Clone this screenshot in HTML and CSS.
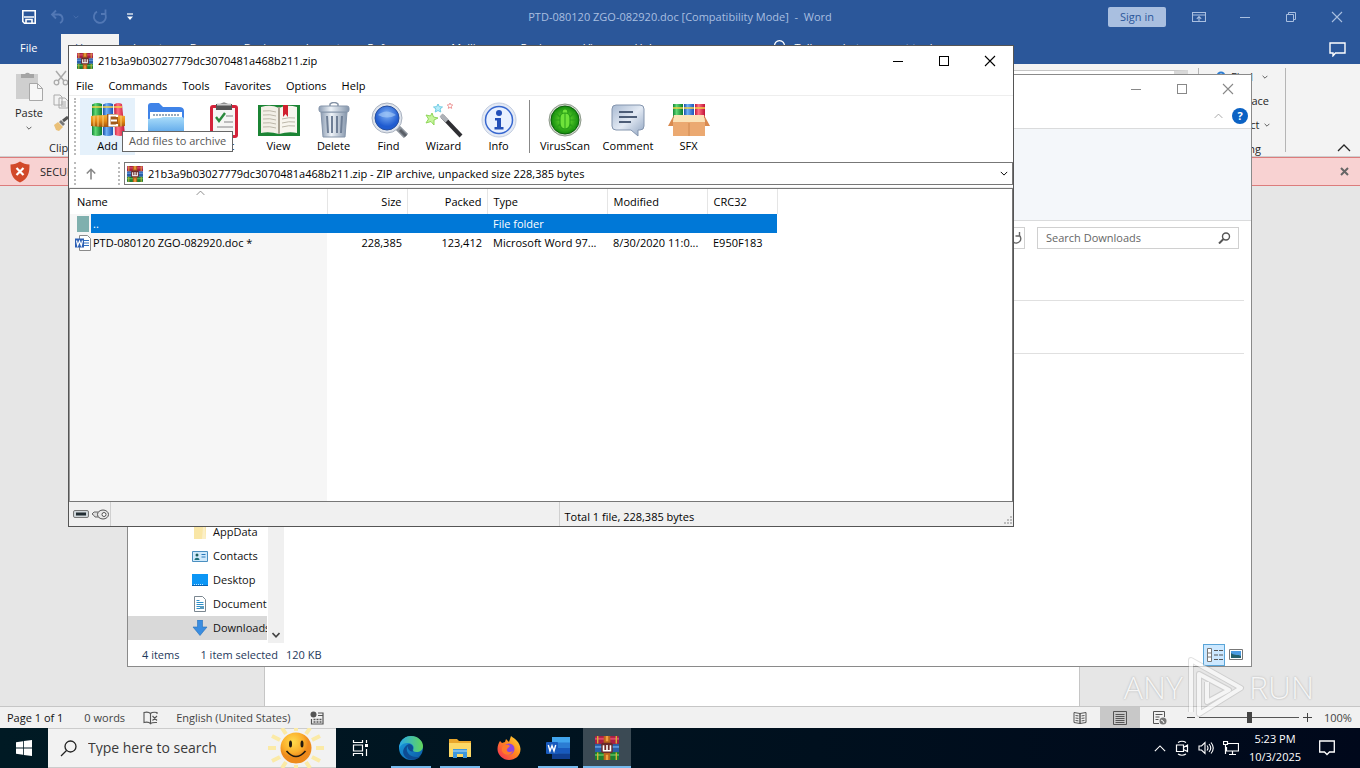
FILE: index.html
```html
<!DOCTYPE html>
<html lang="en">
<head>
<meta charset="utf-8">
<title>Desktop</title>
<link rel="stylesheet" href="styles.css">
</head>
<body>
<svg class="defs" aria-hidden="true">
  <defs>
    <linearGradient id="g-green"><stop offset="0" stop-color="#12853a"/><stop offset=".35" stop-color="#5fd873"/><stop offset="1" stop-color="#0b7a2c"/></linearGradient>
    <linearGradient id="g-blue"><stop offset="0" stop-color="#1c4fa8"/><stop offset=".35" stop-color="#6fb0f5"/><stop offset="1" stop-color="#1d55b8"/></linearGradient>
    <linearGradient id="g-red"><stop offset="0" stop-color="#c3193c"/><stop offset=".35" stop-color="#ff6f80"/><stop offset="1" stop-color="#c01238"/></linearGradient>
    <linearGradient id="g-belt" x2="0" y2="1"><stop offset="0" stop-color="#f4b13c"/><stop offset=".5" stop-color="#e58a14"/><stop offset="1" stop-color="#a3520a"/></linearGradient>
    <linearGradient id="g-folder" x2="0" y2="1"><stop offset="0" stop-color="#a8dcfa"/><stop offset="1" stop-color="#4d9be6"/></linearGradient>
    <linearGradient id="g-steel"><stop offset="0" stop-color="#8d9db3"/><stop offset=".4" stop-color="#eef3f8"/><stop offset="1" stop-color="#8495ab"/></linearGradient>
    <radialGradient id="g-lens" cy=".35"><stop offset="0" stop-color="#7fb2f5"/><stop offset="1" stop-color="#1f5bd0"/></radialGradient>
    <radialGradient id="g-virus"><stop offset="0" stop-color="#7df03a"/><stop offset="1" stop-color="#128a0c"/></radialGradient>
    <linearGradient id="g-bubble" x2="1" y2="1"><stop offset="0" stop-color="#a9bad2"/><stop offset=".5" stop-color="#e3eaf4"/><stop offset="1" stop-color="#8ea3c0"/></linearGradient>
    <radialGradient id="g-sun" cx=".4" cy=".3"><stop offset="0" stop-color="#ffdc4e"/><stop offset=".7" stop-color="#fbae2b"/><stop offset="1" stop-color="#ee8a1c"/></radialGradient>
    <linearGradient id="g-edge" x2="1" y2="1"><stop offset="0" stop-color="#1ba0e0"/><stop offset="1" stop-color="#0c59a4"/></linearGradient>
    <linearGradient id="g-edge2"><stop offset="0" stop-color="#2aa9e8"/><stop offset="1" stop-color="#62d65a"/></linearGradient>
    <linearGradient id="g-fox" x1="1" x2="0" y2="1"><stop offset="0" stop-color="#ffe23a"/><stop offset=".45" stop-color="#ff8a1e"/><stop offset="1" stop-color="#f5255c"/></linearGradient>
  </defs>
  <symbol id="rar" viewBox="0 0 16 16">
    <rect width="16" height="5.400" rx=".7" fill="#a91f45"/><rect y="1.200" width="16" height="1.300" fill="#d9486b"/>
    <rect y="5.400" width="16" height="5.400" fill="#2a5ea8"/><rect y="6.600" width="16" height="1.300" fill="#5b94d8"/>
    <rect y="10.700" width="16" height="5.300" rx=".7" fill="#1d7f30"/><rect y="12" width="16" height="1.300" fill="#4fb254"/>
    <path d="M1.800 0v5M14.200 0v5M1.800 11v5M14.200 11v5" stroke="#d8b436" stroke-width=".9"/>
    <rect x="5.800" width="4.400" height="16" fill="#b8641c"/><path d="M8 0v3.500M8 12.500v3.500" stroke="#f0a040" stroke-width="1.600"/>
    <rect x="4.200" y="4.500" width="7.600" height="6.800" rx="1" fill="#6b2a2a"/>
    <path d="M5.700 6.200v3.600h4.600V6.200M8 6v3.500" fill="none" stroke="#fff" stroke-width="1.100"/>
  </symbol>
  <symbol id="down" viewBox="0 0 10 6"><path d="M1 1l4 4 4-4" fill="none" stroke="currentColor" stroke-width="1.200"/></symbol>
  <symbol id="up" viewBox="0 0 14 8"><path d="M1 7l6-6 6 6" fill="none" stroke="currentColor" stroke-width="1.300"/></symbol>
  <symbol id="close" viewBox="0 0 12 12"><path d="M1 1l10 10M11 1L1 11" fill="none" stroke="currentColor" stroke-width="1.100"/></symbol>
  <symbol id="min" viewBox="0 0 12 12"><path d="M1 6.500h10" stroke="currentColor"/></symbol>
  <symbol id="max" viewBox="0 0 12 12"><rect x="1.500" y="1.500" width="9" height="9" fill="none" stroke="currentColor"/></symbol>
</svg>

<div class="screen">
<main class="desktop">

  <section class="word" aria-label="Word">
    <header class="word-title">
      <div class="quick">
        <button aria-label="Save"><svg width="16" height="16" viewBox="0 0 16 16"><path d="M1.800 1.800h12.400v12.400H3.500l-1.700-1.700z" fill="none" stroke="#fff" stroke-width="1.600"/><path d="M3 8h10" stroke="#fff" stroke-width="1.500"/><path d="M5 15v-4.500h6V15" fill="none" stroke="#fff" stroke-width="1.600"/></svg></button>
        <button aria-label="Undo"><svg width="16" height="16" viewBox="0 0 16 16"><path d="M6 1.500L2 5.500l4 4M2 5.500h7a4.500 4.500 0 0 1 1 8.500" fill="none" stroke="#5278b5" stroke-width="1.800"/></svg></button>
        <svg class="dim" width="6" height="4"><use href="#down"/></svg>
        <button aria-label="Redo"><svg width="16" height="16" viewBox="0 0 16 16"><path d="M5 2.600A6 6 0 1 0 12.500 4M9 5h4.500V.5" fill="none" stroke="#5278b5" stroke-width="1.800"/></svg></button>
        <button class="custom" aria-label="Customize"><svg width="8" height="8" viewBox="0 0 8 8"><path d="M1 1h6" stroke="#fff" stroke-width="1.200"/><path d="M1 3.500h6L4 7z" fill="#fff"/></svg></button>
      </div>
      <h1>PTD-080120 ZGO-082920.doc [Compatibility Mode]&nbsp; -&nbsp; Word</h1>
      <div class="word-ctl">
        <button class="signin">Sign in</button>
        <button aria-label="Ribbon options"><svg width="14" height="12" viewBox="0 0 14 12"><path d="M.5 1.500h13v9H.5zM.5 4h13M7 10V6M4.800 7.800L7 5.600l2.200 2.200" fill="none" stroke="currentColor" stroke-width="1.100"/></svg></button>
        <button aria-label="Minimize"><svg width="12" height="12"><use href="#min"/></svg></button>
        <button aria-label="Restore"><svg width="12" height="12" viewBox="0 0 12 12"><path d="M1.500 3.500h7v7h-7zM3.500 3.500v-2h7v7h-2" fill="none" stroke="currentColor"/></svg></button>
        <button aria-label="Close"><svg width="12" height="12"><use href="#close"/></svg></button>
      </div>
    </header>
    <nav class="word-tabs">
      <a href="#" class="file">File</a><a href="#" class="on">Home</a><a href="#">Insert</a><a href="#">Draw</a><a href="#">Design</a><a href="#">Layout</a><a href="#">References</a><a href="#">Mailings</a><a href="#">Review</a><a href="#">View</a><a href="#">Help</a>
      <a href="#" class="tell"><svg width="13" height="16" viewBox="0 0 13 16"><path d="M4 12V10A5 5 0 1 1 9 10v2zM4.500 14.500h4" fill="none" stroke="#fff" stroke-width="1.300"/></svg>Tell me what you want to do</a>
      <button class="comments" aria-label="Comments"><svg width="17" height="15" viewBox="0 0 17 15"><path d="M1 1h15v10H6.500L4 13.800V11H1z" fill="none" stroke="#fff" stroke-width="1.400"/></svg></button>
    </nav>
    <div class="ribbon">
      <div class="clip">
        <button class="paste"><svg width="30" height="32" viewBox="0 0 30 32"><path d="M2 3h22v25H2z" fill="#cfcfcf"/><path d="M7 3h4a3 3 0 0 1 5 0h4v4H7z" fill="#a5a5a5"/><path d="M15.500 12.500h8l5 5v12h-13z" fill="#f7f7f7" stroke="#a8a8a8"/><path d="M23.500 12.500v5h5" fill="none" stroke="#a8a8a8"/></svg>Paste<svg width="6" height="4"><use href="#down"/></svg></button>
        <div class="cuts">
          <svg width="16" height="16" viewBox="0 0 16 16"><path d="M3 1l8 10M13 1L5 11" stroke="#aaa" stroke-width="1.500"/><circle cx="3.500" cy="12.500" r="2.300" fill="none" stroke="#aaa" stroke-width="1.300"/><circle cx="12.500" cy="12.500" r="2.300" fill="none" stroke="#aaa" stroke-width="1.300"/></svg>
          <svg width="16" height="16" viewBox="0 0 16 16"><path d="M1 2h6l2 2v8H1zM6 5h6l3 3v7H6z" fill="#f3f3f3" stroke="#aaa"/><path d="M8 9h5M8 11h5M8 13h5" stroke="#aaa"/></svg>
          <svg width="16" height="16" viewBox="0 0 16 16"><path d="M1 9l4-3 5 5-4 4-3-1z" fill="#eac078"/><path d="M6 6l2-2 4 4-2 2z" fill="#777"/><path d="M10 5l5-4" stroke="#555" stroke-width="3"/></svg>
        </div>
        <span class="clip-name">Clipboard</span>
      </div>
      <div class="gallery"></div>
      <div class="editing">
        <button class="first"><svg width="12" height="12" viewBox="0 0 12 12"><circle cx="6" cy="5" r="3.500" fill="none" stroke="#2b7cd3" stroke-width="2"/></svg>Find<svg class="drop" width="6" height="4"><use href="#down"/></svg></button>
        <button>Replace</button>
        <button>Select<svg width="6" height="4"><use href="#down"/></svg></button>
        <span>Editing</span>
      </div>
      <button class="collapse" aria-label="Collapse ribbon"><svg width="14" height="8"><use href="#up"/></svg></button>
    </div>
    <div class="warn">
      <svg width="20" height="22" viewBox="0 0 20 22"><path d="M10 .5c3 2 6 3 9.500 3 0 8-1 14-9.500 18C1.500 17.500.5 11.500.5 3.500 4 3.500 7 2.500 10 .5z" fill="#d2492a"/><path d="M6.500 7l7 7M13.500 7l-7 7" stroke="#fff" stroke-width="2.200"/></svg>
      <span>SECURITY RISK</span>
      <button aria-label="Dismiss"><svg width="9" height="9" viewBox="0 0 9 9"><path d="M1 1l7 7M8 1L1 8" stroke="#666" stroke-width="2"/></svg></button>
    </div>
    <div class="doc"><div class="page"></div></div>
    <footer class="word-status">
      <span class="s-page">Page 1 of 1</span><span class="s-words">0 words</span>
      <svg class="s-book" width="16" height="14" viewBox="0 0 16 14"><path d="M7.500 2.500C6 1 3 1 1 1.500v10c2-.5 5-.5 6.500 1zM7.500 2.500C9 1 11 1 14 1.500V3M7.500 12.500c1-.8 3-1.200 6.500-1M9.500 5l4.500 4.500M14 5L9.500 9.500" fill="none" stroke="#555" stroke-width="1.100"/></svg>
      <span class="s-lang">English (United States)</span>
      <svg width="14" height="14" viewBox="0 0 14 14"><circle cx="3.500" cy="3.500" r="3" fill="#555"/><path d="M8 2h5v11H1.500V8M8 4.500h5" fill="none" stroke="#555" stroke-width="1.200"/><path d="M3.500 8.500h8M3.500 11h8" stroke="#555" stroke-width="1.300" stroke-dasharray="2 1"/></svg>
      <div class="views">
        <button aria-label="Read mode"><svg width="14" height="14" viewBox="0 0 14 14"><path d="M7 2.500L1 1.500v10l6 1zM7 2.500l6-1v10l-6 1zM2.500 4.500l3 .4M2.500 7l3 .4M2.500 9.500l3 .4M8.500 4.900l3-.4M8.500 7.400l3-.4M8.500 9.900l3-.4" fill="none" stroke="#555"/></svg></button>
        <button class="on" aria-label="Print layout"><svg width="14" height="14" viewBox="0 0 14 14"><path d="M.5.5h13v13H.5zM2.500 3.500h9M2.500 5.500h9M2.500 7.500h9M2.500 9.500h9M2.500 11.500h9" fill="none" stroke="#555"/></svg></button>
        <button aria-label="Web layout"><svg width="14" height="14" viewBox="0 0 14 14"><path d="M6 12.500H.5V.5h11V6M2.500 3.500h7M2.500 6h4M2.500 8.500h3" fill="none" stroke="#555"/><circle cx="10" cy="10" r="3.500" fill="#777"/><path d="M8 9l2 1 1 2" stroke="#fff" fill="none"/></svg></button>
      </div>
      <div class="zoomer"><button aria-label="Zoom out"><svg width="8" height="9" viewBox="0 0 8 9"><path d="M0 4.500h8" stroke="#444"/></svg></button><input type="range" min="0" max="100" value="50" aria-label="Zoom"><button aria-label="Zoom in"><svg width="9" height="9" viewBox="0 0 9 9"><path d="M0 4.500h9M4.500 0v9" stroke="#444"/></svg></button><span>100%</span></div>
    </footer>
  </section>

  <section class="explorer" aria-label="Downloads">
    <header class="ex-title">
      <button aria-label="Minimize"><svg width="12" height="12"><use href="#min"/></svg></button>
      <button aria-label="Maximize"><svg width="12" height="12"><use href="#max"/></svg></button>
      <button aria-label="Close"><svg width="12" height="12"><use href="#close"/></svg></button>
    </header>
    <div class="ex-tabs">
      <button aria-label="Collapse"><svg width="9" height="6"><use href="#up"/></svg></button>
      <button class="help" aria-label="Help">?</button>
    </div>
    <div class="ex-ribbon"></div>
    <div class="ex-address">
      <div class="path"><svg width="12" height="12" viewBox="0 0 12 12"><path d="M3 3.500A4.500 4.500 0 1 0 9 3M9.500 0v4h-4" fill="none" stroke="#666" stroke-width="1.400"/></svg></div>
      <label class="find"><input type="text" placeholder="Search Downloads" aria-label="Search Downloads"><svg width="13" height="12" viewBox="0 0 13 12"><circle cx="8" cy="4.500" r="3.500" fill="none" stroke="#555" stroke-width="1.400"/><path d="M5.500 7L1 11.500" stroke="#555" stroke-width="2"/></svg></label>
    </div>
    <div class="ex-body">
      <ul class="tree">
        <li><svg width="16" height="16" viewBox="0 0 16 16"><path d="M2 1h12v14H2z" fill="#f9e6a6"/><path d="M11 3h2l1 12h-4z" fill="#fbefc6"/></svg>AppData</li>
        <li><svg width="16" height="16" viewBox="0 0 16 16"><path d="M.5 3.500h15v10H.5z" fill="#cfe9fb" stroke="#4a8fc0"/><circle cx="5" cy="7" r="1.500" fill="#1d5f5f"/><path d="M2.500 12c0-3 5-3 5 0z" fill="#1d6f7a"/><path d="M9.500 6.500h4M9.500 9h4" stroke="#2b78b8"/></svg>Contacts</li>
        <li><svg width="16" height="16" viewBox="0 0 16 16"><path d="M0 2h16v12H0z" fill="#0c96f5"/><path d="M0 13.500h16" stroke="#0860b0"/><path d="M2 12.500h10" stroke="#bfe4ff" stroke-dasharray="1 1"/></svg>Desktop</li>
        <li><svg width="16" height="16" viewBox="0 0 16 16"><path d="M2.500.5h8l3 3v12h-11z" fill="#fff" stroke="#7b8790"/><path d="M4.500 4.500h3M4.500 6.500h7M4.500 8.500h7M4.500 10.500h7M4.500 12.500h4" stroke="#2f8fc8"/><path d="M8 10h4v3H8z" fill="#5a9cc0"/></svg>Documents</li>
        <li class="on"><svg width="16" height="16" viewBox="0 0 16 16"><path d="M5.500 0h5v7H15l-7 8.500L1 7h4.500z" fill="#3b8de0" stroke="#2670ba" stroke-width=".6"/></svg>Downloads</li>
      </ul>
      <div class="bar"><svg width="8" height="6" viewBox="0 0 8 6"><path d="M.5 1L4 4.800 7.500 1" fill="none" stroke="#444" stroke-width="1.600"/></svg></div>
      <div class="files"><div class="group"></div><div class="group next"></div></div>
    </div>
    <footer class="ex-status">
      <span>4 items</span><span class="picked">1 item selected</span><span class="kb">120 KB</span>
      <button class="on" aria-label="Details"><svg width="17" height="14" viewBox="0 0 17 14"><path d="M1.500.5h4v13h-4zM1.500 5h4M1.500 9h4" fill="#fff" stroke="#777"/><path d="M8 2.500h9M8 7h9M8 11.500h9" stroke="#555" stroke-dasharray="4 1"/></svg></button>
      <button aria-label="Large icons"><svg width="14" height="12" viewBox="0 0 14 12"><path d="M.5.5h13v10H.5z" fill="#fff" stroke="#777"/><path d="M2 2h10v7H2z" fill="#4b9be0"/><path d="M2 4c4 3 7 1 10 3v2H2z" fill="#25606b"/></svg></button>
    </footer>
  </section>

  <section class="winrar" aria-label="WinRAR">
    <header class="wr-title">
      <svg width="16" height="16"><use href="#rar"/></svg>
      <h2>21b3a9b03027779dc3070481a468b211.zip</h2>
      <button aria-label="Minimize"><svg width="12" height="12"><use href="#min"/></svg></button>
      <button aria-label="Maximize"><svg width="12" height="12"><use href="#max"/></svg></button>
      <button aria-label="Close"><svg width="12" height="12"><use href="#close"/></svg></button>
    </header>
    <nav class="wr-menu"><a href="#">File</a><a href="#">Commands</a><a href="#">Tools</a><a href="#">Favorites</a><a href="#">Options</a><a href="#">Help</a></nav>
    <div class="wr-tools">
      <i class="grip"></i>
      <button class="hot"><svg width="34" height="36" viewBox="0 0 34 36"><path d="M1 2.500Q6 0 11 2v31Q6 35 1 33z" fill="url(#g-green)"/><path d="M12 2.500q5-2.500 10-.5v31q-5 2-10 0z" fill="url(#g-blue)"/><path d="M23 2.500q4-2.500 8-.5l3 31q-5 2-10 0z" fill="url(#g-red)"/><path d="M1 5h10M12 5h10M23 5h8" stroke="#f3d24a" stroke-width="1.500"/><path d="M0 14q17-2 34 0v10q-17 2-34 0z" fill="url(#g-belt)"/><path d="M3 13.500v11M7 13.500v11M12 13.500v11M30 13.500v11" stroke="#fbd27a"/><path d="M16 12h11v13H16z" fill="#a35a18"/><path d="M26 15v-1.500h-7.500v10H26V22M20 18.500h6" fill="none" stroke="#fff" stroke-width="2.200"/></svg>Add</button>
      <button class="extract"><svg width="38" height="36" viewBox="0 0 38 36"><path d="M1 4q0-3 3-3h8l4 4h16q5 0 5 4v24H1z" fill="#3f83e8"/><path d="M3 10h32v9H3z" fill="#fff"/><path d="M6 13h26" stroke="#9ab" stroke-width="2" stroke-dasharray="2 1"/><path d="M1 17q9-1 12-1l3-1h19q2 0 2 3v17H1z" fill="url(#g-folder)"/></svg>Extract To</button>
      <button><svg width="30" height="36" viewBox="0 0 30 36"><rect x="1" y="3" width="28" height="33" rx="3" fill="#d4233a"/><path d="M4 6h22v27H4z" fill="#f6f6f4"/><path d="M7 2h4q4-3 8 0h4v6H7z" fill="#555"/><path d="M8 2.500h14" stroke="#ccc" stroke-width="2"/><path d="M7 15l3 4 6-8" fill="none" stroke="#2b8a3c" stroke-width="2.400"/><path d="M17 14h7M15 20h9M8 25h16" stroke="#aaa" stroke-width="1.500"/></svg>Test</button>
      <button><svg width="44" height="36" viewBox="0 0 44 36"><path d="M1 3h42v31H1z" fill="#1b8434"/><path d="M22 32Q12 29 4 31V5q10-3 18 1z" fill="#f2efe6"/><path d="M22 32q10-3 18-1V5Q30 2 22 6z" fill="#f8f6ef"/><path d="M22 5v27" stroke="#a9a292" stroke-width="2"/><path d="M6 9q7-1 13 1M6 13q7-1 13 1M6 17q7-1 13 1M6 21q7-1 13 1M6 25q7-1 13 1M25 17q7-2 13-1M25 21q7-2 13-1M25 25q7-2 13-1" fill="none" stroke="#bdb8aa"/><path d="M26 3h5v12l-2.500-3L26 15z" fill="#d0202e"/></svg>View</button>
      <button><svg width="32" height="36" viewBox="0 0 32 36"><path d="M12 2q4-3 8 0v3h-8z" fill="none" stroke="#8593a6" stroke-width="1.500"/><path d="M3 10h26l-2 25H5z" fill="url(#g-steel)" stroke="#8595aa"/><path d="M9 14l1 17M14 14v17M19 14v17M24 14l-1 17" stroke="#6f7f96" stroke-width="2"/><rect x="1" y="4" width="30" height="6" rx="2" fill="url(#g-steel)" stroke="#8595aa"/></svg>Delete</button>
      <button><svg width="38" height="36" viewBox="0 0 38 36"><path d="M26 24l10 10" stroke="#8c939c" stroke-width="6"/><path d="M30 28l6 6" stroke="#5b6068" stroke-width="3"/><circle cx="17" cy="16" r="15" fill="#dfe4ec" stroke="#a9b2c0"/><circle cx="17" cy="16" r="12" fill="url(#g-lens)" stroke="#274f9d"/><path d="M8 13q8-7 18 0-9 5-18 0z" fill="#a9cdf8" opacity=".6"/></svg>Find</button>
      <button><svg width="38" height="36" viewBox="0 0 38 36"><path d="M17 14l19 20" stroke="#2f2f33" stroke-width="4"/><path d="M16 13l6 6" stroke="#aeb2b8" stroke-width="4"/><path d="M7 11l1.500 4 4.500 1-4 2 0 5-3-3.500-5 1.500 2.500-4L1 13l4.500 1z" fill="#c6f59c" stroke="#8fd65a"/><path d="M13 2l1.300 2.700 3.200.3-2.500 2 .8 3-2.800-1.500L10.200 10 11 7 8.500 5l3.200-.3z" fill="#b5ecfa" stroke="#6fcbe3"/><path d="M25 1l.8 1.800 2 .2-1.500 1.400.4 2L25 5.400l-1.700 1 .4-2L22.200 3l2-.2z" fill="#fff" stroke="#e99"/></svg>Wizard</button>
      <button><svg width="36" height="36" viewBox="0 0 36 36"><circle cx="18" cy="18" r="17" fill="#e4eaf5" stroke="#c4cee0"/><circle cx="18" cy="18" r="13.500" fill="#e9f1ff" stroke="#3767cf" stroke-width="1.500"/><circle cx="18" cy="11" r="3" fill="#2450b8"/><path d="M14 16h6v9h2.500v2.500H13.500V25H16v-6.500h-2z" fill="#2450b8"/></svg>Info</button>
      <i class="sep"></i>
      <button class="wide"><svg width="34" height="36" viewBox="0 0 34 36"><circle cx="17" cy="18" r="16" fill="#cfd6cc" stroke="#8d9a8a"/><circle cx="17" cy="18" r="14" fill="url(#g-virus)" stroke="#0b5f0a"/><path d="M12 16q0-5 5-5t5 5v5q0 6-5 6t-5-6zM5 18h7M22 18h7M7 10l5 5M27 10l-5 5M7 27l5-5M27 27l-5-5M14 11q0-4 3-4t3 4" fill="#6fe23a" stroke="#2aa018" stroke-width="1.200"/><path d="M17 11v16" stroke="#2aa018"/></svg>VirusScan</button>
      <button class="comment"><svg width="34" height="36" viewBox="0 0 34 36"><path d="M5 3h24q4 0 4 4v17q0 4-4 4h-2v6l-7-6H5q-4 0-4-4V7q0-4 4-4z" fill="url(#g-bubble)" stroke="#8495ae"/><path d="M8 10h14M8 15h18M8 20h12" stroke="#4d5d77" stroke-width="1.800"/></svg>Comment</button>
      <button><svg width="42" height="36" viewBox="0 0 42 36"><path d="M5 2h10v14H5z" fill="url(#g-green)"/><path d="M16 2h10v14H16z" fill="url(#g-blue)"/><path d="M27 2h10v14H27z" fill="url(#g-red)"/><path d="M5 6h10M16 6h10M27 6h10" stroke="#f3d24a" stroke-width="1.500"/><path d="M6 13h30l1 8H5z" fill="#fbe3b8"/><path d="M5 20h32v14H5z" fill="#eba971"/><path d="M6 13L0 24h5v-4zM36 13l6 11h-5v-4z" fill="#d98a4f"/><path d="M21 21v13" stroke="#cf8850"/></svg>SFX</button>
    </div>
    <div class="wr-path">
      <i class="grip"></i>
      <button aria-label="Up one level"><svg width="10" height="12" viewBox="0 0 10 12"><path d="M5 11.500V1.500M.8 5.500L5 1.300l4.200 4.200" fill="none" stroke="#888" stroke-width="1.600"/></svg></button>
      <i class="grip"></i>
      <div class="combo"><svg width="16" height="16"><use href="#rar"/></svg><select aria-label="Archive path"><option>21b3a9b03027779dc3070481a468b211.zip - ZIP archive, unpacked size 228,385 bytes</option></select><svg width="8" height="5"><use href="#down"/></svg></div>
    </div>
    <div class="wr-list">
      <table>
        <thead><tr><th class="name"><div>Name<svg width="9" height="6"><use href="#up"/></svg></div></th><th class="num">Size</th><th class="num">Packed</th><th class="type">Type</th><th class="mod">Modified</th><th class="crc">CRC32</th></tr></thead>
        <tbody>
          <tr class="sel"><td class="name"><div><i class="fold"></i><span>..</span></div></td><td></td><td></td><td>File folder</td><td></td><td></td></tr>
          <tr><td class="name"><div><svg width="16" height="16" viewBox="0 0 16 16"><path d="M4.500.5h8l3 3v12h-11z" fill="#fff" stroke="#8a8a8a"/><path d="M9 5.500h5M9 8h5M9 10.500h5" stroke="#2f6fc0"/><rect y="3.500" width="9" height="9" fill="#2b5fb4"/><path d="M1.500 5.500l1.200 5 1.800-4.500 1.800 4.500 1.200-5" fill="none" stroke="#fff" stroke-width="1.200"/></svg><span>PTD-080120 ZGO-082920.doc *</span></div></td><td class="num">228,385</td><td class="num">123,412</td><td>Microsoft Word 97...</td><td>8/30/2020 11:0...</td><td>E950F183</td></tr>
        </tbody>
      </table>
      <div class="shade"></div>
    </div>
    <footer class="wr-status">
      <div class="lock"><svg width="16" height="8" viewBox="0 0 16 8"><rect x=".5" y=".5" width="15" height="7" rx="1.500" fill="#cfd6da" stroke="#777"/><path d="M3 2.500h10v3H3z" fill="#222d33"/></svg><svg width="17" height="11" viewBox="0 0 17 11"><path d="M7 3H2L0 5l2 1.500L3 8h5" fill="#ddd" stroke="#666"/><ellipse cx="11" cy="5.500" rx="5.500" ry="4.500" fill="#e8e8e8" stroke="#555"/><circle cx="12" cy="5.500" r="2" fill="#fff" stroke="#555"/></svg></div>
      <div class="blank"></div>
      <div class="total">Total 1 file, 228,385 bytes<svg width="9" height="9" viewBox="0 0 9 9"><path d="M7 1h2M4 4h2M7 4h2M1 7h2M4 7h2M7 7h2" stroke="#bbb" stroke-width="2"/></svg></div>
    </footer>
    <div class="tip" role="tooltip">Add files to archive</div>
  </section>

  <div class="mark" aria-hidden="true"><span>ANY</span><svg width="58" height="66" viewBox="0 0 58 66"><g fill="none" stroke="#999" stroke-opacity=".5" stroke-width="6" stroke-linejoin="round"><path d="M4 58V6L54 34 12 60V20L42 36 20 48V28"/></g><path d="M4 58V6L54 34 12 60V20L42 36 20 48V28" fill="none" stroke="#fff" stroke-width="4" stroke-linejoin="round"/></svg><span>RUN</span></div>
</main>

<footer class="taskbar">
  <button class="start" aria-label="Start"><svg width="16" height="16" viewBox="0 0 16 16"><path d="M0 2.300L7 1.200V7.600H0zM7.800 1.100L16 0v7.600H7.800zM0 8.400h7v6.400L0 13.700zM7.800 8.400H16V16l-8.200-1.100z" fill="#fff"/></svg></button>
  <label class="search"><svg width="17" height="17" viewBox="0 0 17 17"><circle cx="10.500" cy="6.500" r="5.500" fill="none" stroke="#222" stroke-width="1.300"/><path d="M6.500 10.500L1 16" stroke="#222" stroke-width="1.300"/></svg><input type="text" placeholder="Type here to search" aria-label="Type here to search">
    <svg width="56" height="40" viewBox="0 0 56 40"><g stroke="#fbeaa6" stroke-width="4"><path d="M0 20h8M48 20h8M4 8l8 4M44 12l8-4M4 33l8-4M44 29l8 4M14 0l4 6M42 0l-4 6M14 40l4-6M42 40l-4-6M28 0v3M28 37v3"/></g><circle cx="28" cy="20" r="15.500" fill="url(#g-sun)"/><ellipse cx="22.500" cy="16" rx="1.500" ry="3.500" fill="#231a10"/><ellipse cx="34" cy="16" rx="1.500" ry="3.500" fill="#231a10"/><path d="M18.500 23q9.500 11 19 0" fill="none" stroke="#231a10" stroke-width="1.600"/></svg></label>
  <button class="tv" aria-label="Task view"><svg width="17" height="16" viewBox="0 0 17 16"><path d="M1.500 0v2.500h9V0M1.500 5h9v6h-9zM1.500 16v-2.500h9V16M14.500 0v3M14.500 9v7" fill="none" stroke="#fff" stroke-width="1.200"/><path d="M13 4h3v3h-3z" fill="#fff"/></svg></button>
  <button class="app run" aria-label="Edge"><svg width="24" height="24" viewBox="0 0 24 24"><circle cx="12" cy="12" r="12" fill="url(#g-edge)"/><path d="M.3 10C2 3 7 0 12 0c7 0 12 5 12 10 0 4-3 6-6.500 6-3 0-4-1-3-3 1-4-3-6.500-6.500-6C4 7.500 1 9 .3 13z" fill="url(#g-edge2)"/><path d="M8.500 10C6 15 10 21 17 21c3 0 4-.5 5-1.500-4 5.500-12 5.500-16 1S5 10 10 8c2 0 4.500 2 4 4.500-.5 1.500-.5 2 .5 3-3 .5-6-2-6-5.500z" fill="#0d4c94"/></svg></button>
  <button class="app run" aria-label="File Explorer"><svg width="22" height="20" viewBox="0 0 22 20"><path d="M0 1h8l2 2h12v16H0z" fill="#e9a62b"/><path d="M0 5h22v14H0z" fill="#fcd866"/><path d="M4 20v-9h14v9h-4v-4H8v4z" fill="#3d97dd"/><path d="M4 13h14" stroke="#8ac6f2" stroke-width="1.500"/></svg></button>
  <button class="app" aria-label="Firefox"><svg width="24" height="24" viewBox="0 0 24 24"><path d="M3 5l2 2 3-1 1-3 3 3 2-6c4 3 9 6 9.500 13C23.500 20 18 24 12 24S.5 19 .5 13C.5 10 1.500 7 3 5z" fill="url(#g-fox)"/><circle cx="12" cy="13" r="5.500" fill="#8d45e0"/><path d="M6 10c3-2 6-1 7 0l-3 3c-1 3 3 4 6 2-2 5-9 5-11 0-.5-2 0-4 1-5z" fill="#ff7a2a"/></svg></button>
  <button class="app run" aria-label="Word"><svg width="24" height="22" viewBox="0 0 24 22"><path d="M6 0h18v22H6z" fill="#2b7cd3"/><path d="M6 0h18v5.500H6z" fill="#41a5ee"/><path d="M6 11h18v5.500H6z" fill="#185abd"/><path d="M6 16.500h18V22H6z" fill="#103f91"/><rect y="5" width="12" height="12" rx="1" fill="#185abd"/><path d="M2.300 8l1.700 6L6 8.800 8 14l1.700-6" fill="none" stroke="#fff" stroke-width="1.400"/></svg></button>
  <button class="app run now" aria-label="WinRAR"><svg width="24" height="24"><use href="#rar"/></svg></button>
  <div class="tray">
    <svg width="12" height="7"><use href="#up"/></svg>
    <svg width="14" height="16" viewBox="0 0 14 16"><path d="M1.500 5h7v6.500h-7zM8.500 7.500L12.500 5v6.500l-4-2M3 2.500Q7 0 11 2.500M3 14q4 2.500 8 0" fill="none" stroke="#fff" stroke-width="1.200"/></svg>
    <svg width="16" height="14" viewBox="0 0 16 14"><path d="M1 5h2.500L7 1.500v11L3.500 9H1zM9 4.500q2 2.500 0 5M11 3q3.500 4 0 8M13 1.500q4.500 5.500 0 11" fill="none" stroke="#fff" stroke-width="1.100"/></svg>
    <svg width="16" height="14" viewBox="0 0 16 14"><path d="M5 2.500h10.500v7.500H3.500V6M9.500 10v3M6 13.500h7M.5.5h4v3h-4zM2.500 3.500V13" fill="none" stroke="#fff" stroke-width="1.200"/></svg>
  </div>
  <time class="clock"><span>5:23 PM</span><span>10/3/2025</span></time>
  <button class="note" aria-label="Notifications"><svg width="16" height="16" viewBox="0 0 16 16"><path d="M.7 1h14.600v11H10.500L8 14.500 5.500 12H.7z" fill="none" stroke="#fff" stroke-width="1.300"/></svg></button>
</footer>
</div>
</body>
</html>
```
FILE: styles.css
```css
* { box-sizing: border-box; }
body { margin: 0; font-family: "Open Sans", "Noto Sans", sans-serif; font-size: 11px; line-height: 16px; color: #000; }
button, input, select { font: inherit; color: inherit; margin: 0; padding: 0; border: 0; background: none; border-radius: 0; }
button { display: flex; align-items: center; justify-content: center; }
a { color: inherit; text-decoration: none; }
h1, h2 { margin: 0; font-size: 11px; font-weight: 400; }
svg { flex: none; display: block; }
ul { list-style: none; margin: 0; padding: 0; }
.defs { position: absolute; width: 0; height: 0; }

.screen { height: 100vh; display: grid; grid-template-rows: 1fr 40px; overflow: hidden; }
.desktop { position: relative; overflow: hidden; display: flex; }

/* Word */
.word { flex: 1; display: flex; flex-direction: column; background: #e6e6e6; }
.word-title { background: #2b579a; color: #a9bfe0; height: 34px; display: grid; grid-template-columns: 1fr auto 1fr; align-items: center; }
.quick { display: flex; align-items: center; padding-left: 21px; gap: 13px; }
.quick .dim { color: #5278b5; margin-left: -6px; }
.quick .custom { padding-left: 5px; }
.word-ctl { display: flex; justify-content: flex-end; align-items: center; }
.word-ctl button { width: 46px; height: 30px; }
.word-ctl .signin { width: 58px; height: 20px; background: #a9bfe0; color: #2b579a; border-radius: 2px; margin-right: 10px; }
.word-tabs { background: #2b579a; color: #fff; height: 30px; display: flex; }
.word-tabs a { padding: 6px 13px 0 14px; }
.word-tabs .file { width: 61px; padding-left: 20px; }
.word-tabs .on { width: 58px; background: #f3f3f3; color: #2b579a; }
.word-tabs .tell { display: flex; gap: 8px; margin-left: 88px; }
.comments { margin-left: auto; width: 46px; }
.ribbon { background: #f3f3f3; height: 93px; display: flex; border-bottom: 1px solid #d0cece; color: #262626; }
.clip { display: grid; grid-template-columns: 46px 30px; grid-template-rows: 72px 20px; padding-left: 6px; }
.paste { flex-direction: column; justify-content: flex-start; gap: 2px; padding-top: 7px; }
.paste svg:last-child { margin-top: 3px; }
.cuts { display: grid; gap: 7px; padding: 6px 0 0 1px; align-content: start; }
.clip-name { grid-column: 1 / 3; padding: 4px 0 0 43px; }
.gallery { flex: 1; margin: 6px 10px 20px 100px; border: 1px solid #c6c6c6; border-right: 14px solid #d8d8d8; background: #fff; }
.editing { width: 88px; margin: 4px 0; padding: 1px 12px 0 16px; border: solid #b5b5b5; border-width: 0 1px; display: flex; flex-direction: column; gap: 8px; align-items: flex-start; }
.editing button { gap: 5px; height: 16px; padding-left: 14px; }
.editing .first { padding-left: 0; gap: 4px; }
.drop { margin-left: 5px; }
.editing span { padding-left: 11px; }
.collapse { width: 32px; margin-left: 42px; align-items: flex-end; padding-bottom: 4px; }
.warn { height: 29px; background: #f8d2d2; border: solid #dc7c7c; border-width: 1px 0; display: flex; align-items: center; padding: 0 11px 0 10px; gap: 10px; color: #262626; }
.warn button { margin-left: auto; }
.doc { flex: 1; display: flex; justify-content: center; padding-right: 17px; }
.page { width: 100%; max-width: 816px; background: #fff; border: solid #c6c6c6; border-width: 0 1px; }
.word-status { height: 22px; background: #f1f1f1; border-top: 1px solid #c6c6c6; display: flex; align-items: center; color: #444; padding: 0 8px 0 7px; }
.s-page { color: #111; }
.s-words { margin-left: 21px; }
.s-book { margin-left: 18px; }
.s-lang { margin: 0 20px 0 17px; }
.views { margin-left: auto; display: flex; align-self: stretch; }
.views button { width: 40px; }
.views .on { background: #c8c8c8; }
.zoomer { display: flex; align-items: center; padding-left: 4px; }
.zoomer button { width: 14px; }
.zoomer span { width: 28px; margin-left: 10px; white-space: nowrap; }
input[type=range] { appearance: none; width: 100px; height: 12px; margin: 0 1px; background: linear-gradient(#555, #555) center / 100% 1px no-repeat; }
input[type=range]::-webkit-slider-thumb { appearance: none; width: 5px; height: 11px; background: #444; }

/* File Explorer */
.explorer { position: absolute; left: 127px; right: 108px; top: 74px; bottom: 61px; background: #fff; border: 1px solid #8a8a8a; display: flex; flex-direction: column; color: #111; }
.ex-title { height: 28px; display: flex; justify-content: flex-end; color: #888; }
.ex-title button { width: 46px; }
.ex-tabs { height: 25px; display: flex; justify-content: flex-end; align-items: center; gap: 9px; padding-right: 3px; color: #999; }
.help { width: 16px; height: 16px; border-radius: 50%; background: #0b62c4; color: #fff; font-weight: 700; }
.ex-ribbon { height: 93px; background: #f4f7fa; border: solid #dadbdc; border-width: 1px 0; }
.ex-address { height: 34px; display: flex; align-items: center; gap: 12px; padding: 0 12px; }
.path { flex: 1; height: 22px; border: 1px solid #d0d0d0; display: flex; align-items: center; justify-content: flex-end; padding-right: 2px; }
.find { width: 202px; height: 22px; border: 1px solid #d0d0d0; display: flex; align-items: center; padding: 0 7px 0 8px; }
.find input { flex: 1; min-width: 0; }
.find input::placeholder { color: #666; opacity: 1; }
.ex-body { flex: 1; min-height: 0; display: flex; }
.tree { width: 139px; overflow: hidden; display: flex; flex-direction: column; justify-content: flex-end; padding-bottom: 3px; }
.tree li { flex: none; height: 24px; display: flex; align-items: center; gap: 5px; padding-left: 64px; }
.tree .on { background: #d9d9d9; }
.bar { width: 16px; margin-left: 1px; background: #f0f0f0; display: flex; align-items: flex-end; justify-content: center; padding-bottom: 5px; }
.files { flex: 1; padding: 0 7px 0 20px; }
.group { height: 46px; border-bottom: 1px solid #e0e0e0; }
.next { height: 53px; }
.ex-status { height: 23px; display: flex; align-items: center; padding: 0 4px 0 14px; color: #1e395b; }
.picked { margin-left: 21px; }
.kb { margin-left: 8px; }
.ex-status button { width: 22px; height: 22px; }
.ex-status .on { margin-left: auto; background: #cce8ff; border: 1px solid #5aa5d8; }

/* WinRAR */
.winrar { position: absolute; left: 68px; right: 346px; top: 45px; bottom: 201px; background: #fff; border: 1px solid #555; display: flex; flex-direction: column; }
.wr-title { height: 29px; display: flex; align-items: center; padding-left: 8px; }
.wr-title h2 { margin: 0 auto 0 5px; }
.wr-title button { width: 46px; height: 29px; }
.wr-menu { height: 21px; display: flex; gap: 15px; padding: 3px 7px 0; border-bottom: 1px solid #eee; }
.wr-tools { height: 62px; display: flex; padding: 2px 0 3px 5px; }
.grip { width: 6px; border-left: 2px dotted #bbb; flex: none; }
.wr-tools button { width: 55px; flex-direction: column; padding-top: 4px; justify-content: flex-start; white-space: nowrap; }
.wr-tools .hot { background: #e5f1fb; }
.wr-tools .extract { width: 61px; }
.wr-tools .wide { width: 60px; }
.wr-tools .comment { width: 66px; }
.sep { width: 1px; margin: 2px 5px 2px 3px; background: #888; }
.wr-path { height: 30px; display: flex; padding: 4px 0 2px 5px; border-bottom: 1px solid #eee; }
.wr-path button { width: 38px; padding-right: 16px; }
.combo { flex: 1; border: 1px solid #777; display: flex; align-items: center; padding: 0 4px 0 2px; gap: 5px; }
.combo select { flex: 1; appearance: none; }
.wr-list { flex: 1; min-height: 0; border: 1px solid #777; border-left-color: #999; display: flex; flex-direction: column; }
table { border-collapse: collapse; width: 707px; table-layout: fixed; }
th, td { padding: 0 6px; text-align: left; font-weight: 400; white-space: nowrap; height: 19px; }
th { height: 25px; border-right: 1px solid #e5e5e5; }
th.num, td.num { text-align: right; width: 80px; padding: 0 5px; }
th.name { width: 257px; padding: 0 0 0 7px; }
th.name div { height: 25px; line-height: 25px; display: flex; }
th.name svg { margin: 1px auto 0 88px; color: #777; }
.type { width: 120px; }
.mod { width: 100px; }
.crc { width: 70px; }
td.name { padding: 0 0 0 5px; background: #f6f6f6; }
td.name div { display: flex; align-items: center; gap: 2px; height: 19px; }
tr.sel { background: #0078d7; color: #fff; }
.sel .name div { padding-left: 2px; }
.fold { width: 12px; height: 16px; background: #7fb0ae; flex: none; }
.sel .name span { flex: 1; background: #0078d7; padding-left: 2px; height: 19px; line-height: 19px; }
.shade { flex: 1; width: 257px; background: #f6f6f6; }
.wr-status { height: 24px; background: #f0f0f0; display: flex; align-items: stretch; }
.lock { width: 42px; display: flex; align-items: center; gap: 3px; padding-left: 4px; border-right: 1px solid #d0d0d0; }
.blank { flex: 1; border-right: 1px solid #d0d0d0; }
.total { flex: 1; display: flex; align-items: flex-end; justify-content: space-between; padding: 0 1px 1px 5px; }
.tip { position: absolute; left: 53px; top: 85px; height: 21px; padding: 0 6px; border: 1px solid #666; background: #fff; color: #575757; line-height: 18px; }

.mark { position: absolute; right: 46px; bottom: 8px; display: flex; align-items: center; gap: 4px; color: #fff; opacity: .6; font-size: 32px; font-weight: 300; line-height: 40px; text-shadow: 0 0 2px #888; }

/* Taskbar */
.taskbar { display: flex; align-items: stretch; background: linear-gradient(90deg, #001a24, #00101e 60%, #00081b); color: #fff; padding-right: 4px; }
.start { width: 48px; }
.search { width: 288px; background: #f2f2f2; display: flex; align-items: center; padding: 0 12px; gap: 11px; border: 1px solid #ccc; border-width: 1px 0; }
.search input { flex: 1; min-width: 0; font-size: 14px; }
.search input::placeholder { color: #3a3a3a; opacity: 1; }
.tv { width: 48px; margin-right: 3px; }
.app { width: 48px; margin-right: 1px; }
.run { background: linear-gradient(#76b9ed, #76b9ed) bottom / 40px 2px no-repeat; }
.now { background: linear-gradient(#76b9ed, #76b9ed) bottom / 48px 2px no-repeat #3b4a54; }
.tray { margin-left: auto; display: flex; align-items: center; gap: 9px; }
.clock { width: 72px; display: flex; flex-direction: column; align-items: center; padding-top: 2px; line-height: 18px; }
.note { width: 32px; margin-right: 13px; }
```
